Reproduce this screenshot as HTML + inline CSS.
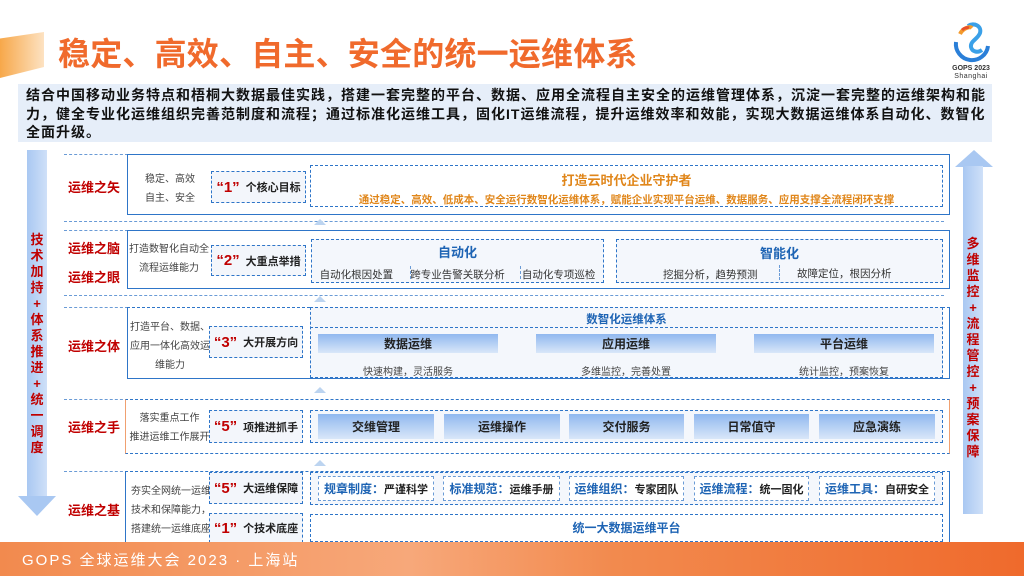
<!DOCTYPE html>
<html><head><meta charset="utf-8"><style>
*{margin:0;padding:0;box-sizing:border-box}
body{width:1024px;height:576px;position:relative;overflow:hidden;background:#fff;font-family:"Liberation Sans","Noto Sans CJK SC",sans-serif}
.a{position:absolute}
.c{display:flex;align-items:center;justify-content:center;text-align:center}
.lbl{color:#c00000;font-weight:bold;font-size:13px}
.ds{color:#444;font-size:10px;line-height:19px;text-align:center}
.qb{border:1px dashed #2e75c8;background:#f3f6fb;font-size:11px;font-weight:bold;color:#222}
.qb b{color:#c00000;font-size:15px;margin-right:6px}
.db{border:1px dashed #2e75c8;background:#f4f7fc}
.row{border:1px solid #2e75c8;border-top:1px dashed #2e75c8;background:#fff}
.sep{height:0;border-top:1px dashed #6a9bd6}
.up{width:0;height:0;border-left:6px solid transparent;border-right:6px solid transparent;border-bottom:6px solid #bcd4f0}
.bar{background:linear-gradient(180deg,#90b8ef,#d9e7f9);font-size:12px;font-weight:bold;color:#222}
.chip{border:1px dashed #6a9bd6;background:#fff;font-size:11px;font-weight:bold;color:#222}
.chip span{color:#1e64b4;font-size:12px}
.vt{color:#c00000;font-weight:bold;font-size:13px;line-height:16px;text-align:center;width:20px}
</style></head><body>
<!-- title -->
<div class="a" style="left:0;top:32px;width:44px;height:46px;background:linear-gradient(90deg,#f7a84a,#fde2c2);clip-path:polygon(0 14%,100% 0,100% 76%,0 100%)"></div>
<div class="a" style="left:58px;top:29px;font-size:32px;font-weight:bold;color:#f06a2c;letter-spacing:0.2px;white-space:nowrap">稳定、高效、自主、安全的统一运维体系</div>
<!-- logo -->
<svg class="a" style="left:948px;top:20px" width="48" height="44" viewBox="0 0 48 44">
<path d="M8 22a16 16 0 0 0 32 4" fill="none" stroke="#2a7fd8" stroke-width="4"/>
<path d="M20 6c6-4 14 0 12 7-2 6-10 8-9 14 1 5 7 6 11 3" fill="none" stroke="#3aa0e8" stroke-width="4"/>
<path d="M12 14c3-6 10-8 12-6" fill="none" stroke="#f39a2c" stroke-width="4"/>
<path d="M14 10c2-2 5-3 7-2" fill="none" stroke="#e8502a" stroke-width="3"/>
</svg>
<div class="a" style="left:950px;top:65px;font-size:7px;font-weight:bold;color:#333;width:42px;text-align:center;line-height:8px">GOPS 2023<br><span style="font-weight:normal;letter-spacing:.5px">Shanghai</span></div>
<!-- desc -->
<div class="a" style="left:18px;top:84px;width:974px;height:58px;background:#e6eef9"></div>
<div class="a" style="left:26px;top:86px;width:980px;font-size:14px;font-weight:bold;line-height:18.5px;color:#111;letter-spacing:1px;white-space:nowrap">结合中国移动业务特点和梧桐大数据最佳实践，搭建一套完整的平台、数据、应用全流程自主安全的运维管理体系，沉淀一套完整的运维架构和能<br>力，健全专业化运维组织完善范制度和流程；通过标准化运维工具，固化IT运维流程，提升运维效率和效能，实现大数据运维体系自动化、数智化<br>全面升级。</div>
<!-- left arrow -->
<div class="a" style="left:27px;top:150px;width:20px;height:346px;background:linear-gradient(90deg,#a9c8f2,#cfe0f8)"></div>
<div class="a" style="left:18px;top:496px;width:38px;height:20px;background:#a9c8f2;clip-path:polygon(0 0,100% 0,50% 100%)"></div>
<div class="a vt" style="left:27px;top:232px">技<br>术<br>加<br>持<br>+<br>体<br>系<br>推<br>进<br>+<br>统<br>一<br>调<br>度</div>
<!-- right arrow -->
<div class="a" style="left:955px;top:150px;width:38px;height:17px;background:#a9c8f2;clip-path:polygon(50% 0,100% 100%,0 100%)"></div>
<div class="a" style="left:963px;top:166px;width:20px;height:348px;background:linear-gradient(90deg,#a9c8f2,#cfe0f8)"></div>
<div class="a vt" style="left:963px;top:236px">多<br>维<br>监<br>控<br>+<br>流<br>程<br>管<br>控<br>+<br>预<br>案<br>保<br>障</div>

<!-- row1 -->
<div class="a sep" style="left:64px;top:154px;width:64px"></div>
<div class="a row" style="left:127px;top:154px;width:823px;height:61px;border-top-style:solid"></div>
<div class="a lbl" style="left:68px;top:177px">运维之矢</div>
<div class="a ds" style="left:135px;top:170px;width:70px">稳定、高效<br>自主、安全</div>
<div class="a qb c" style="left:211px;top:171px;width:95px;height:32px"><b>“1”</b>个核心目标</div>
<div class="a db" style="left:310px;top:165px;width:633px;height:42px;background:#fff"></div>
<div class="a" style="left:310px;top:170px;width:633px;text-align:center;font-size:13px;font-weight:bold;color:#e0861a">打造云时代企业守护者</div>
<div class="a" style="left:310px;top:192px;width:633px;text-align:center;font-size:10.5px;font-weight:bold;color:#e0861a;white-space:nowrap">通过稳定、高效、低成本、安全运行数智化运维体系，赋能企业实现平台运维、数据服务、应用支撑全流程闭环支撑</div>
<div class="a sep" style="left:64px;top:221px;width:880px"></div>
<div class="a up" style="left:314px;top:219px"></div>

<!-- row2 -->
<div class="a sep" style="left:64px;top:230px;width:64px"></div>
<div class="a row" style="left:127px;top:230px;width:823px;height:59px;border-top-style:solid"></div>
<div class="a lbl" style="left:68px;top:238px">运维之脑</div>
<div class="a lbl" style="left:68px;top:267px">运维之眼</div>
<div class="a ds" style="left:129px;top:240px;width:80px">打造数智化自动全<br>流程运维能力</div>
<div class="a qb c" style="left:211px;top:245px;width:95px;height:31px"><b>“2”</b>大重点举措</div>
<div class="a db" style="left:311px;top:239px;width:293px;height:44px"></div>
<div class="a" style="left:311px;top:242px;width:293px;text-align:center;font-size:13px;font-weight:bold;color:#1e64b4">自动化</div>
<div class="a" style="left:311px;top:267px;width:293px;font-size:10.5px;color:#333;display:flex;justify-content:space-around">
<span>自动化根因处置</span><span>跨专业告警关联分析</span><span>自动化专项巡检</span></div>
<div class="a" style="left:410px;top:266px;height:13px;border-left:1px dashed #6a9bd6"></div>
<div class="a" style="left:520px;top:266px;height:13px;border-left:1px dashed #6a9bd6"></div>
<div class="a db" style="left:616px;top:239px;width:327px;height:44px"></div>
<div class="a" style="left:616px;top:243px;width:327px;text-align:center;font-size:13px;font-weight:bold;color:#1e64b4">智能化</div>
<div class="a" style="left:663px;top:267px;font-size:10.5px;color:#333">挖掘分析，趋势预测</div>
<div class="a" style="left:797px;top:266px;font-size:10.5px;color:#333">故障定位，根因分析</div>
<div class="a" style="left:779px;top:265px;height:15px;border-left:1px dashed #6a9bd6"></div>
<div class="a sep" style="left:64px;top:295px;width:880px"></div>
<div class="a up" style="left:314px;top:296px"></div>

<!-- row3 -->
<div class="a sep" style="left:64px;top:307px;width:64px"></div>
<div class="a row" style="left:127px;top:307px;width:823px;height:72px"></div>
<div class="a lbl" style="left:68px;top:336px">运维之体</div>
<div class="a ds" style="left:129px;top:318px;width:82px">打造平台、数据、<br>应用一体化高效运<br>维能力</div>
<div class="a qb c" style="left:209px;top:326px;width:94px;height:32px"><b>“3”</b>大开展方向</div>
<div class="a db" style="left:310px;top:307px;width:633px;height:71px"></div>
<div class="a" style="left:310px;top:327px;width:633px;border-top:1px dashed #2e75c8"></div>
<div class="a" style="left:310px;top:311px;width:633px;text-align:center;font-size:11.5px;font-weight:bold;color:#1e64b4">数智化运维体系</div>
<div class="a bar c" style="left:318px;top:334px;width:180px;height:19px">数据运维</div>
<div class="a bar c" style="left:536px;top:334px;width:180px;height:19px">应用运维</div>
<div class="a bar c" style="left:754px;top:334px;width:180px;height:19px">平台运维</div>
<div class="a" style="left:318px;top:363px;width:180px;text-align:center;font-size:10px;color:#444">快速构建，灵活服务</div>
<div class="a" style="left:536px;top:363px;width:180px;text-align:center;font-size:10px;color:#444">多维监控，完善处置</div>
<div class="a" style="left:754px;top:363px;width:180px;text-align:center;font-size:10px;color:#444">统计监控，预案恢复</div>
<div class="a up" style="left:314px;top:387px"></div>

<!-- row4 -->
<div class="a sep" style="left:64px;top:399px;width:64px"></div>
<div class="a row" style="left:125px;top:399px;width:825px;height:55px;border-color:#f0a070;border-top:1px dashed #2e75c8;border-bottom:1px dashed #2e75c8"></div>
<div class="a lbl" style="left:68px;top:417px">运维之手</div>
<div class="a ds" style="left:127px;top:409px;width:85px">落实重点工作<br>推进运维工作展开</div>
<div class="a qb c" style="left:209px;top:410px;width:94px;height:33px"><b>“5”</b>项推进抓手</div>
<div class="a db" style="left:310px;top:410px;width:633px;height:33px"></div>
<div class="a bar c" style="left:318px;top:414px;width:116px;height:25px">交维管理</div>
<div class="a bar c" style="left:444px;top:414px;width:116px;height:25px">运维操作</div>
<div class="a bar c" style="left:569px;top:414px;width:115px;height:25px">交付服务</div>
<div class="a bar c" style="left:694px;top:414px;width:115px;height:25px">日常值守</div>
<div class="a bar c" style="left:819px;top:414px;width:116px;height:25px">应急演练</div>
<div class="a up" style="left:314px;top:460px"></div>

<!-- row5 -->
<div class="a sep" style="left:64px;top:471px;width:64px"></div>
<div class="a row" style="left:125px;top:471px;width:825px;height:72px"></div>
<div class="a lbl" style="left:68px;top:500px">运维之基</div>
<div class="a ds" style="left:127px;top:482px;width:85px;text-align:left;padding-left:4px;line-height:19px;white-space:nowrap">夯实全网统一运维<br>技术和保障能力，<br>搭建统一运维底座</div>
<div class="a qb c" style="left:209px;top:472px;width:94px;height:32px"><b>“5”</b>大运维保障</div>
<div class="a qb c" style="left:209px;top:513px;width:94px;height:30px"><b>“1”</b>个技术底座</div>
<div class="a db" style="left:310px;top:472px;width:633px;height:33px"></div>
<div class="a chip c" style="left:318px;top:476px;width:116px;height:25px"><span>规章制度：</span>严谨科学</div>
<div class="a chip c" style="left:443px;top:476px;width:117px;height:25px"><span>标准规范：</span>运维手册</div>
<div class="a chip c" style="left:569px;top:476px;width:115px;height:25px"><span>运维组织：</span>专家团队</div>
<div class="a chip c" style="left:694px;top:476px;width:115px;height:25px"><span>运维流程：</span>统一固化</div>
<div class="a chip c" style="left:819px;top:476px;width:116px;height:25px"><span>运维工具：</span>自研安全</div>
<div class="a db" style="left:310px;top:514px;width:633px;height:28px;background:#fff"></div>
<div class="a" style="left:310px;top:519px;width:633px;text-align:center;font-size:12px;font-weight:bold;color:#1e64b4">统一大数据运维平台</div>

<!-- footer -->
<div class="a" style="left:0;top:542px;width:1024px;height:34px;background:linear-gradient(90deg,#f28a4e,#f7a87a 40%,#f28a4e 60%,#ef6a2c)"></div>
<div class="a" style="left:22px;top:549px;font-size:15px;color:#fff;letter-spacing:2px;white-space:nowrap">GOPS 全球运维大会 2023 · 上海站</div>
</body></html>
